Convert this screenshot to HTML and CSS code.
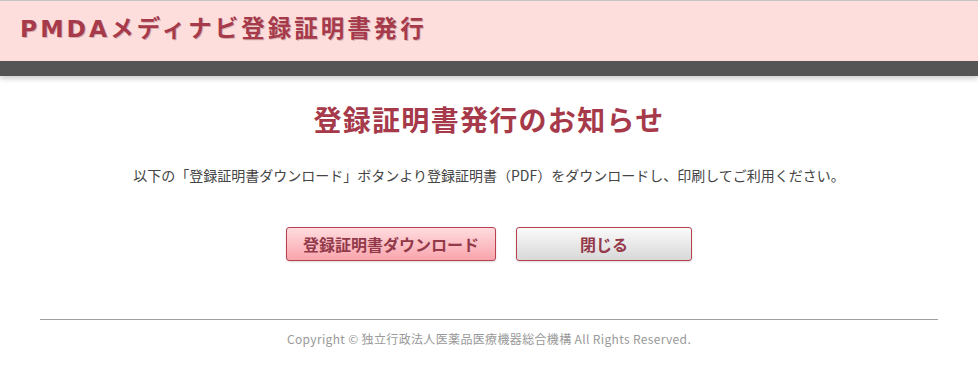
FILE: index.html
```html
<!DOCTYPE html>
<html lang="ja">
<head>
<meta charset="utf-8">
<title>PMDAメディナビ登録証明書発行</title>
<link rel="stylesheet" href="styles.css">
</head>
<body>
<header class="site-header">
  <div class="brand">PMDAメディナビ登録証明書発行</div>
  <div class="band"></div>
</header>
<main class="content">
  <h1 class="heading">登録証明書発行のお知らせ</h1>
  <p class="lead">以下の「登録証明書ダウンロード」ボタンより登録証明書（PDF）をダウンロードし、印刷してご利用ください。</p>
  <div class="actions">
    <button class="btn btn-primary" type="button">登録証明書ダウンロード</button>
    <button class="btn btn-close" type="button">閉じる</button>
  </div>
</main>
<footer class="site-footer">
  <p class="copy">Copyright © 独立行政法人医薬品医療機器総合機構 All Rights Reserved.</p>
</footer>
</body>
</html>
```
FILE: styles.css
```css
* { box-sizing: border-box; }
html, body { margin: 0; padding: 0; background: #fff; }
body {
  font-family: "Noto Sans CJK JP", "DejaVu Sans", sans-serif;
  color: #444;
}
.site-header {
  border-top: 1px solid #c4c4c4;
}
.brand {
  height: 60px;
  background: #fddedd;
  padding: 12px 0 0 20px;
  font-family: "DejaVu Sans", "Noto Sans CJK JP", sans-serif;
  font-weight: bold;
  font-size: 23.5px;
  line-height: 32px;
  letter-spacing: 3px;
  color: #a63a4a;
  text-shadow: 1px 1px 0 rgba(90, 30, 40, 0.25);
}
.band {
  height: 15px;
  background: #555;
  box-shadow: 0 3px 5px rgba(0, 0, 0, 0.18);
}
.content {
  display: flex;
  flex-direction: column;
  align-items: center;
  padding-top: 23px;
}
.heading {
  margin: 0;
  font-size: 28px;
  line-height: 40px;
  letter-spacing: 1.3px;
  font-weight: bold;
  color: #a63a4a;
}
.lead {
  margin: 26px 0 0;
  font-size: 14px;
  line-height: 20px;
  color: #444;
}
.actions {
  display: flex;
  gap: 20px;
  margin-top: 42px;
}
.btn {
  height: 34px;
  border: 1px solid #b8404f;
  border-radius: 3px;
  font-family: "Noto Sans CJK JP", sans-serif;
  font-size: 16px;
  font-weight: bold;
  color: #93394a;
  padding: 0;
  box-shadow: 0 1px 2px rgba(0, 0, 0, 0.15);
  cursor: pointer;
}
.btn-primary {
  width: 210px;
  background: linear-gradient(#ffdcdf, #f9a5ac);
}
.btn-close {
  width: 176px;
  background: linear-gradient(#fafafa, #d8d8d8);
}
.site-footer {
  margin: 58px 40px 0;
  border-top: 1px solid #a0a0a0;
  padding-top: 10px;
}
.copy {
  margin: 0;
  text-align: center;
  font-size: 12px;
  line-height: 18px;
  letter-spacing: 0.35px;
  color: #999;
}
```
